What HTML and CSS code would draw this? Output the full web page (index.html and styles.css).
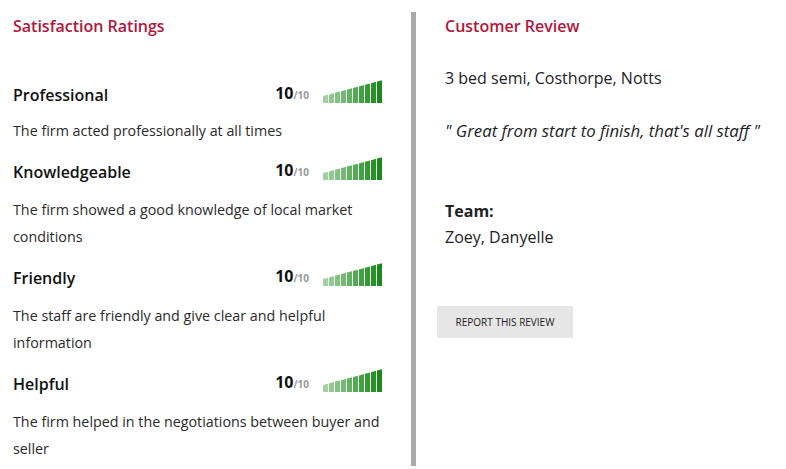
FILE: index.html
```html
<!doctype html>
<html lang="en">
<head>
    <meta charset="UTF-8">
    <title>Review</title>
    <link rel="stylesheet" href="styles.css">
</head>
<body>

<svg class="defs" width="0" height="0">
    <symbol id="bars" viewBox="0 0 60 23">
        <polygon points="0,23 0,16 5,14.67 5,23" fill="#178a17" opacity="0.4"/>
        <polygon points="6,23 6,14.4 11,13.07 11,23" fill="#178a17" opacity="0.47"/>
        <polygon points="12,23 12,12.8 17,11.47 17,23" fill="#178a17" opacity="0.53"/>
        <polygon points="18,23 18,11.2 23,9.87 23,23" fill="#178a17" opacity="0.6"/>
        <polygon points="24,23 24,9.6 29,8.27 29,23" fill="#178a17" opacity="0.67"/>
        <polygon points="30,23 30,8 35,6.67 35,23" fill="#178a17" opacity="0.73"/>
        <polygon points="36,23 36,6.4 41,5.07 41,23" fill="#178a17" opacity="0.8"/>
        <polygon points="42,23 42,4.8 47,3.47 47,23" fill="#178a17" opacity="0.87"/>
        <polygon points="48,23 48,3.2 53,1.87 53,23" fill="#178a17" opacity="0.93"/>
        <polygon points="54,23 54,1.6 59,0.27 59,23" fill="#178a17"/>
    </symbol>
</svg>

<div class="wrap">
    <div class="ratings">
        <h2 class="title">Satisfaction Ratings</h2>

        <div class="item first">
            <div class="item-head">
                <h3>Professional</h3>
                <div class="score">
                    <span class="num">10<small>/10</small></span>
                    <svg class="bars" width="60" height="23"><use href="#bars"/></svg>
                </div>
            </div>
            <p>The firm acted professionally at all times</p>
        </div>

        <div class="item">
            <div class="item-head">
                <h3>Knowledgeable</h3>
                <div class="score">
                    <span class="num">10<small>/10</small></span>
                    <svg class="bars" width="60" height="23"><use href="#bars"/></svg>
                </div>
            </div>
            <p>The firm showed a good knowledge of local market conditions</p>
        </div>

        <div class="item">
            <div class="item-head">
                <h3>Friendly</h3>
                <div class="score">
                    <span class="num">10<small>/10</small></span>
                    <svg class="bars" width="60" height="23"><use href="#bars"/></svg>
                </div>
            </div>
            <p>The staff are friendly and give clear and helpful information</p>
        </div>

        <div class="item">
            <div class="item-head">
                <h3>Helpful</h3>
                <div class="score">
                    <span class="num">10<small>/10</small></span>
                    <svg class="bars" width="60" height="23"><use href="#bars"/></svg>
                </div>
            </div>
            <p>The firm helped in the negotiations between buyer and seller</p>
        </div>
    </div>

    <div class="review">
        <h2 class="title">Customer Review</h2>
        <p class="property">3 bed semi, Costhorpe, Notts</p>
        <p class="quote">" Great from start to finish, that's all staff "</p>
        <div class="team">
            <strong>Team:</strong>
            <span>Zoey, Danyelle</span>
        </div>
        <button class="report">REPORT THIS REVIEW</button>
    </div>
</div>

</body>
</html>
```

FILE: styles.css
```css
*{margin:0;padding:0;box-sizing:border-box;}
body{
    background:#fff;
    font-family:"Open Sans",Arial,sans-serif;
    color:#222;
}
.defs{position:absolute;}
.wrap{
    display:flex;
    margin-top:12px;
    height:454px;
}
.ratings{
    width:411px;
    padding:0 28px 0 13px;
}
.title{
    font-size:16px;
    font-weight:600;
    color:#b2163a;
    line-height:28px;
}
.item.first{margin-top:40px;}
.item-head{
    display:flex;
    justify-content:space-between;
    align-items:flex-end;
    height:26px;
}
.item-head h3{
    font-size:16px;
    font-weight:600;
    color:#111;
    line-height:22px;
}
.score{
    display:flex;
    align-items:flex-end;
    gap:14px;
}
.num{
    font-size:16px;
    font-weight:700;
    color:#111;
    line-height:22px;
}
.num small{
    font-size:10px;
    color:#999;
}
.bars{display:block;margin-bottom:3px;}
.item p{
    font-size:14.3px;
    line-height:27px;
    color:#2a2a2a;
    margin:13px 0 13px;
}
.item.first p{margin-top:11px;}

.review{
    flex:1;
    border-left:5px solid #aaa;
    padding-left:29px;
}
.property{
    font-size:16px;
    margin-top:26px;
    line-height:24px;
}
.quote{
    font-size:16.8px;
    font-style:italic;
    margin-top:29px;
    line-height:24px;
}
.team{
    display:flex;
    flex-direction:column;
    margin-top:55px;
    font-size:16px;
    line-height:26px;
}
.team strong{font-weight:700;}
.report{
    margin:56px 0 0 -8px;
    width:136px;
    height:32px;
    border:none;
    background:#e6e6e6;
    font-family:"Open Sans",Arial,sans-serif;
    font-size:10px;
    color:#222;
}
```
